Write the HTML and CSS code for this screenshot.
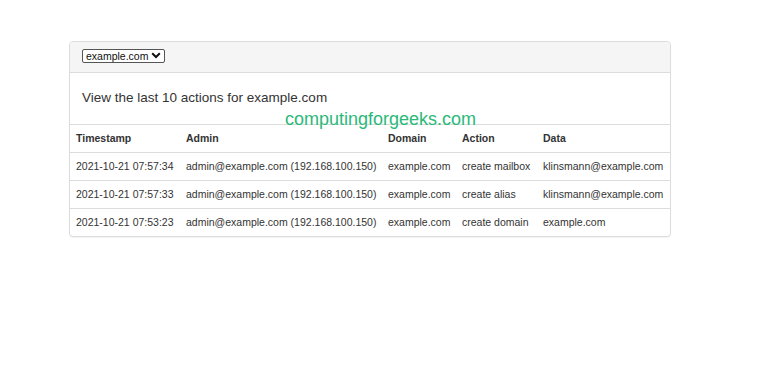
FILE: index.html
```html
<!DOCTYPE html>
<html>
<head>
<meta charset="utf-8">
<link rel="stylesheet" href="styles.css">
</head>
<body>
<div class="page">
  <div class="panel">
    <div class="panel-heading">
      <div class="select">
        <span>example.com</span>
        <svg class="chev" width="10" height="7" viewBox="0 0 10 7"><path d="M1.2 1.3 L5 5 L8.8 1.3" fill="none" stroke="#111" stroke-width="2"/></svg>
      </div>
    </div>
    <div class="panel-body">View the last 10 actions for example.com</div>
    <table class="log">
      <colgroup>
        <col class="c1"><col class="c2"><col class="c3"><col class="c4"><col class="c5">
      </colgroup>
      <thead>
        <tr><th>Timestamp</th><th>Admin</th><th>Domain</th><th>Action</th><th>Data</th></tr>
      </thead>
      <tbody>
        <tr><td>2021-10-21 07:57:34</td><td>admin@example.com (192.168.100.150)</td><td>example.com</td><td>create mailbox</td><td>klinsmann@example.com</td></tr>
        <tr><td>2021-10-21 07:57:33</td><td>admin@example.com (192.168.100.150)</td><td>example.com</td><td>create alias</td><td>klinsmann@example.com</td></tr>
        <tr><td>2021-10-21 07:53:23</td><td>admin@example.com (192.168.100.150)</td><td>example.com</td><td>create domain</td><td>example.com</td></tr>
      </tbody>
    </table>
  </div>
  <div class="watermark">computingforgeeks.com</div>
</div>
</body>
</html>
```
FILE: styles.css
```css
html, body {
  margin: 0;
  padding: 0;
  background: #fff;
}
body {
  font-family: "Liberation Sans", Arial, sans-serif;
  color: #333;
}
.page {
  position: relative;
  width: 770px;
  height: 389px;
  padding: 41px 0 0 69px;
  box-sizing: border-box;
}
.panel {
  width: 602px;
  box-sizing: border-box;
  border: 1px solid #ddd;
  border-radius: 4px;
  box-shadow: 0 1px 1px rgba(0,0,0,0.05);
  background: #fff;
}
.panel-heading {
  display: flex;
  align-items: center;
  background: #f5f5f5;
  border-bottom: 1px solid #ddd;
  border-radius: 3px 3px 0 0;
  height: 31px;
  padding: 0 0 3px 12px;
  box-sizing: border-box;
}
.select {
  display: inline-flex;
  align-items: center;
  gap: 3px;
  height: 14px;
  box-sizing: border-box;
  border: 1px solid #555;
  border-radius: 2px;
  background: #fff;
  padding: 0 3px 0 3px;
  font-size: 10.5px;
  line-height: 12px;
  color: #111;
}
.chev {
  display: block;
}
.panel-body {
  padding: 12px 12px 14px;
  font-size: 13.5px;
  line-height: 25px;
  color: #333;
}
.log {
  width: 100%;
  border-collapse: collapse;
  table-layout: fixed;
  font-size: 10.5px;
}
.c1 { width: 110px; }
.c2 { width: 202px; }
.c3 { width: 74px; }
.c4 { width: 81px; }
.c5 { width: 133px; }
.log th, .log td {
  text-align: left;
  padding: 0 6px 2px;
  height: 25px;
  border-top: 1px solid #ddd;
  vertical-align: middle;
  white-space: nowrap;
}
.log th {
  font-weight: bold;
  color: #333;
}
.log td {
  color: #333;
}
.watermark {
  position: absolute;
  left: 285px;
  top: 110px;
  font-size: 18px;
  line-height: 18px;
  color: #2bb97a;
  white-space: nowrap;
}
```
